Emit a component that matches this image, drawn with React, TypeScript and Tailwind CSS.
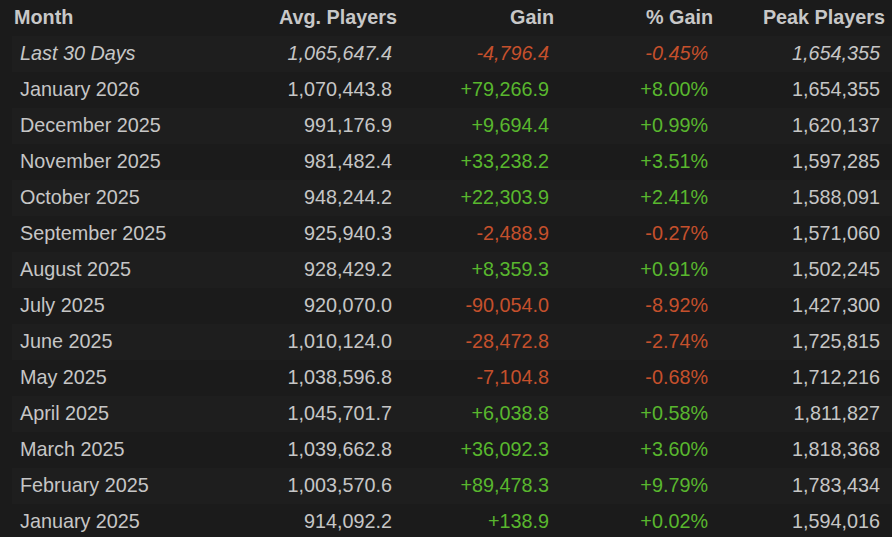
import React from 'react';

interface Row {
  month: string;
  avg: string;
  gain: string;
  pct: string;
  peak: string;
}

const rows: Row[] = [
  { month: 'Last 30 Days', avg: '1,065,647.4', gain: '-4,796.4', pct: '-0.45%', peak: '1,654,355' },
  { month: 'January 2026', avg: '1,070,443.8', gain: '+79,266.9', pct: '+8.00%', peak: '1,654,355' },
  { month: 'December 2025', avg: '991,176.9', gain: '+9,694.4', pct: '+0.99%', peak: '1,620,137' },
  { month: 'November 2025', avg: '981,482.4', gain: '+33,238.2', pct: '+3.51%', peak: '1,597,285' },
  { month: 'October 2025', avg: '948,244.2', gain: '+22,303.9', pct: '+2.41%', peak: '1,588,091' },
  { month: 'September 2025', avg: '925,940.3', gain: '-2,488.9', pct: '-0.27%', peak: '1,571,060' },
  { month: 'August 2025', avg: '928,429.2', gain: '+8,359.3', pct: '+0.91%', peak: '1,502,245' },
  { month: 'July 2025', avg: '920,070.0', gain: '-90,054.0', pct: '-8.92%', peak: '1,427,300' },
  { month: 'June 2025', avg: '1,010,124.0', gain: '-28,472.8', pct: '-2.74%', peak: '1,725,815' },
  { month: 'May 2025', avg: '1,038,596.8', gain: '-7,104.8', pct: '-0.68%', peak: '1,712,216' },
  { month: 'April 2025', avg: '1,045,701.7', gain: '+6,038.8', pct: '+0.58%', peak: '1,811,827' },
  { month: 'March 2025', avg: '1,039,662.8', gain: '+36,092.3', pct: '+3.60%', peak: '1,818,368' },
  { month: 'February 2025', avg: '1,003,570.6', gain: '+89,478.3', pct: '+9.79%', peak: '1,783,434' },
  { month: 'January 2025', avg: '914,092.2', gain: '+138.9', pct: '+0.02%', peak: '1,594,016' },
];

const cols = 'grid grid-cols-[200px_186px_157px_159px_172px]';

export default function App() {
  return (
    <div
      className="w-[892px] h-[537px] overflow-hidden bg-[#1b1b1b] pl-3 text-[19.8px] text-[#c6c6c6]"
      style={{ fontFamily: '"Liberation Sans", Arial, sans-serif' }}
    >
      <div className={`${cols} h-9 items-center font-bold text-[#c8c8c8]`}>
        <div className="pl-[2px]">Month</div>
        <div className="text-right pr-px">Avg. Players</div>
        <div className="text-right pr-px">Gain</div>
        <div className="text-right pr-px">% Gain</div>
        <div className="text-right pr-px">Peak Players</div>
      </div>
      {rows.map((r, i) => {
        const neg = r.gain.startsWith('-');
        const tone = neg ? 'text-[#c5502c]' : 'text-[#59b72e]';
        return (
          <div
            key={r.month}
            className={`${cols} h-9 items-center ${i % 2 === 0 ? 'bg-[#1e1e1e]' : 'bg-[#1b1b1b]'} ${i === 0 ? 'italic' : ''}`}
          >
            <div className="pl-2">{r.month}</div>
            <div className="text-right pr-[6px]">{r.avg}</div>
            <div className={`text-right pr-[6px] ${tone}`}>{r.gain}</div>
            <div className={`text-right pr-[6px] ${tone}`}>{r.pct}</div>
            <div className="text-right pr-[6px]">{r.peak}</div>
          </div>
        );
      })}
    </div>
  );
}
